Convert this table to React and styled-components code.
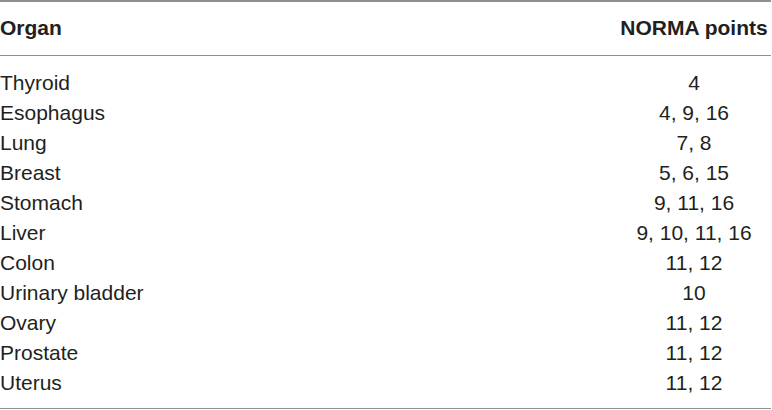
import React from 'react'
import styled, { createGlobalStyle } from 'styled-components'

const GlobalStyle = createGlobalStyle`
  body {
    margin: 0;
    background: #ffffff;
  }
`

const rows = [
  ['Thyroid', '4'],
  ['Esophagus', '4, 9, 16'],
  ['Lung', '7, 8'],
  ['Breast', '5, 6, 15'],
  ['Stomach', '9, 11, 16'],
  ['Liver', '9, 10, 11, 16'],
  ['Colon', '11, 12'],
  ['Urinary bladder', '10'],
  ['Ovary', '11, 12'],
  ['Prostate', '11, 12'],
  ['Uterus', '11, 12'],
]

const Table = styled.div`
  width: 771px;
  border-top: 2px solid #8f8f8f;
  border-bottom: 1.5px solid #8f8f8f;
  font-family: 'Liberation Sans', Arial, Helvetica, sans-serif;
  font-size: 21px;
  color: #231f20;
`

const Row = styled.div`
  display: grid;
  grid-template-columns: 1fr 154px;
  line-height: 30px;
  font-weight: ${(p) => (p.$head ? 700 : 400)};
`

const Head = styled.div`
  padding: 11.4px 0 11.6px;
  border-bottom: 1.5px solid #8f8f8f;
`

const Body = styled.div`
  padding: 12px 0 9.6px;
`

const Cell = styled.div`
  text-align: ${(p) => (p.$center ? 'center' : 'left')};
  white-space: nowrap;
`

const App = () => {
  return (
    <>
      <GlobalStyle />
      <Table>
        <Head>
          <Row $head>
            <Cell>Organ</Cell>
            <Cell $center>NORMA points</Cell>
          </Row>
        </Head>
        <Body>
          {rows.map(([organ, points]) => (
            <Row key={organ}>
              <Cell>{organ}</Cell>
              <Cell $center>{points}</Cell>
            </Row>
          ))}
        </Body>
      </Table>
    </>
  )
}

export default App
